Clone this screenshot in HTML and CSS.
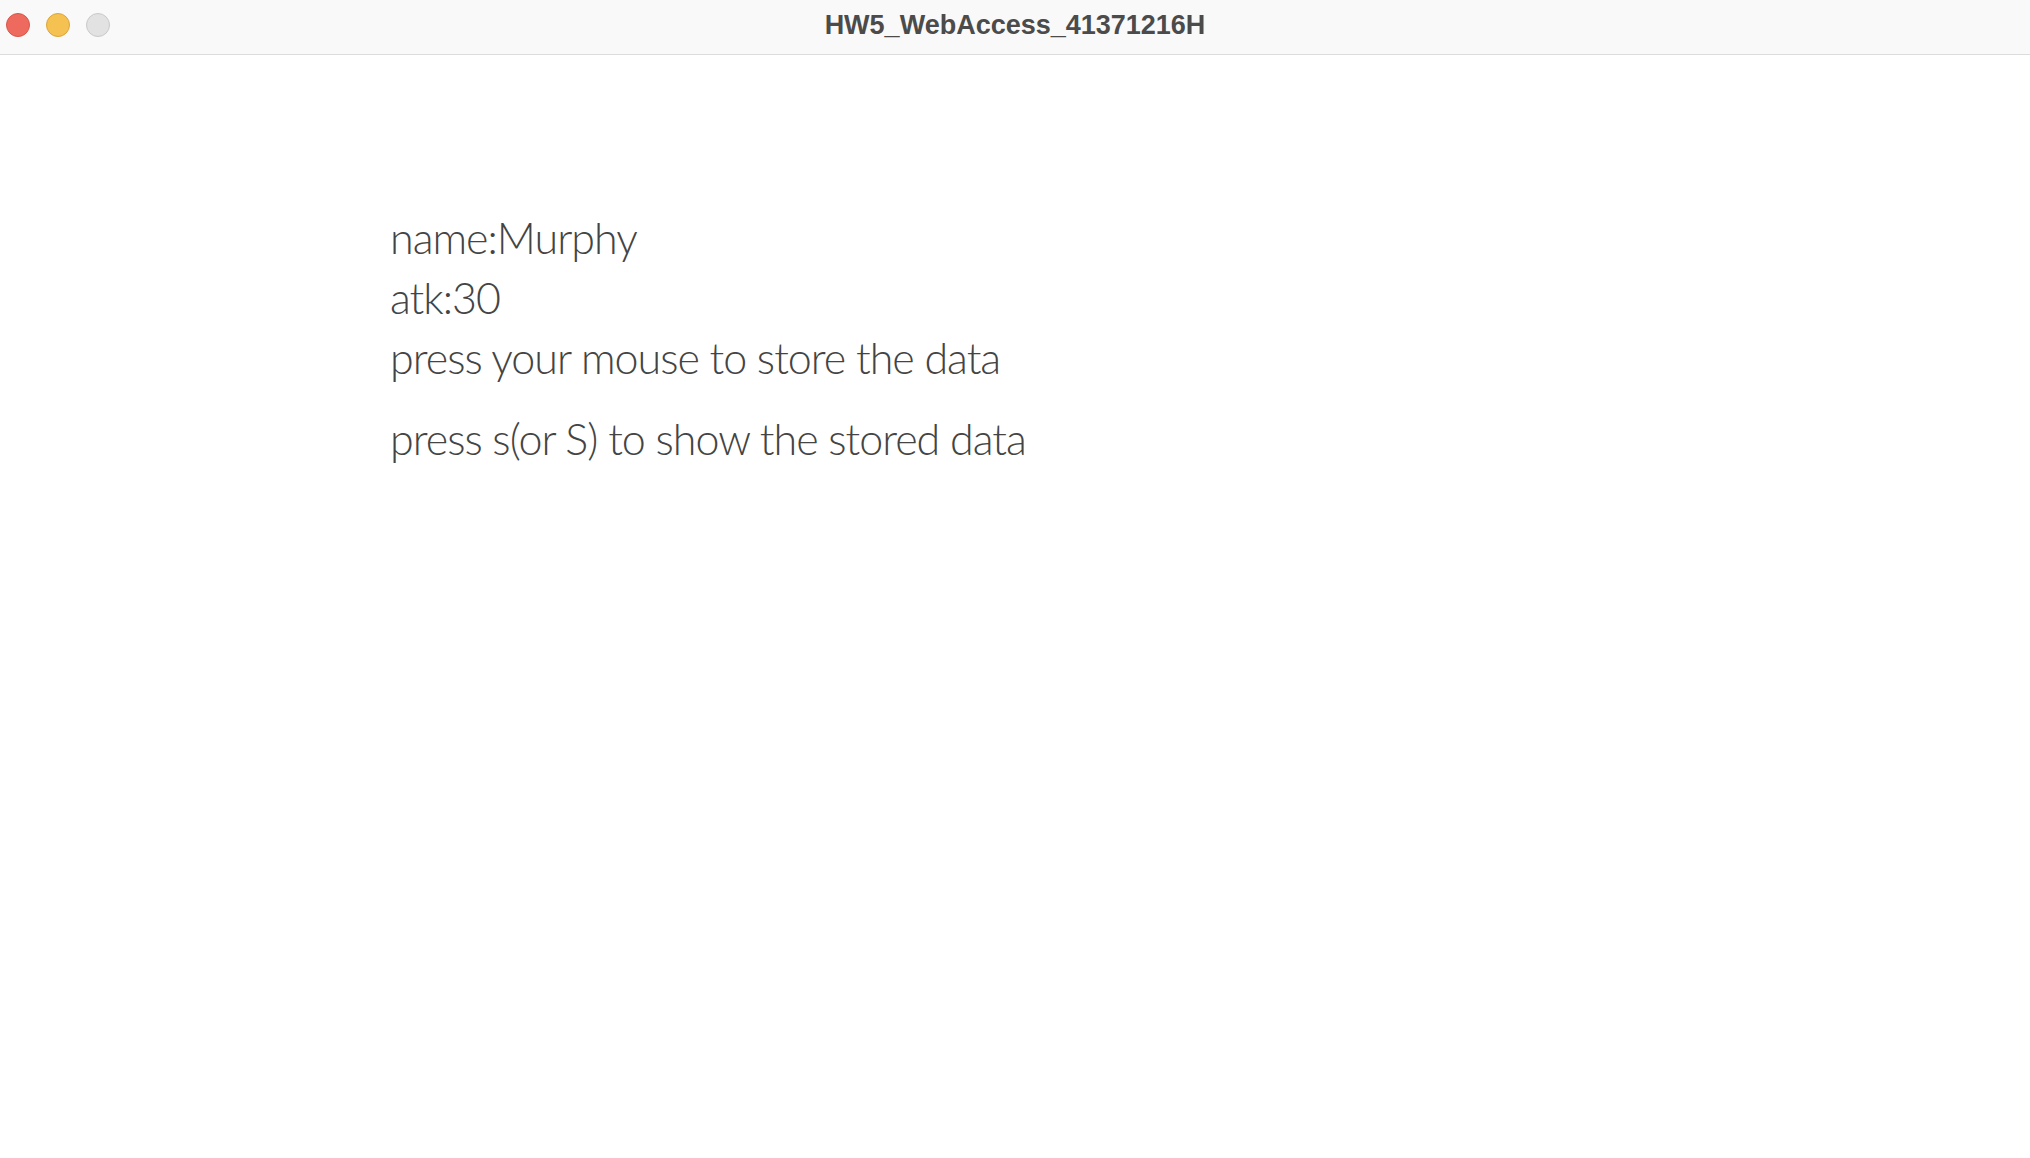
FILE: index.html
```html
<!DOCTYPE html>
<html>
<head>
<meta charset="utf-8">
<link rel="stylesheet" href="styles.css">
</head>
<body>
<header class="titlebar">
  <div class="lights">
    <span class="light red"></span>
    <span class="light yellow"></span>
    <span class="light gray"></span>
  </div>
  <div class="title">HW5_WebAccess_41371216H</div>
</header>
<main class="canvas">
  <div class="info">
    <p class="line">name:Murphy</p>
    <p class="line">atk:30</p>
    <p class="line">press your mouse to store the data</p>
    <p class="line hint">press s(or S) to show the stored data</p>
  </div>
</main>
</body>
</html>
```

FILE: styles.css
```css
html, body {
  margin: 0;
  padding: 0;
  background: #ffffff;
}
body {
  width: 2030px;
  height: 1158px;
  overflow: hidden;
}
.titlebar {
  position: relative;
  height: 54px;
  background: #f9f9f9;
  border-bottom: 1px solid #dcdcdc;
  display: flex;
  align-items: center;
  justify-content: center;
}
.lights {
  position: absolute;
  left: 6px;
  top: 13px;
  display: flex;
  gap: 16px;
}
.light {
  width: 24px;
  height: 24px;
  border-radius: 50%;
  box-sizing: border-box;
}
.red { background: #ee6a5f; border: 1px solid #d6564c; }
.yellow { background: #f5c150; border: 1px solid #dba63a; }
.gray { background: #e2e2e2; border: 1px solid #c9c9c9; }
.title {
  font-family: "Liberation Sans", Arial, sans-serif;
  font-weight: bold;
  font-size: 27px;
  color: #4b4b4b;
  margin-top: -3px;
}
.canvas {
  padding: 153px 0 0 390px;
}
.info {
  font-family: Lato, "Open Sans", sans-serif;
  font-weight: 300;
  font-size: 43px;
  letter-spacing: -1px;
  color: #444;
}
.line {
  margin: 0;
  line-height: 60px;
}
.hint {
  margin-top: 21px;
}
```
